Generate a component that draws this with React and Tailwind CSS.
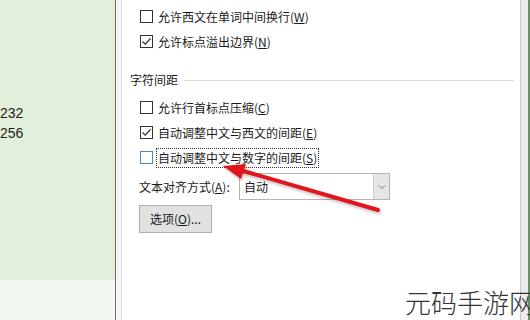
import React from "react";

const font = { fontFamily: '"Microsoft YaHei", "Noto Sans CJK SC", "Noto Sans", sans-serif' };

function Box({ checked, focus }) {
  return (
    <span
      className={`w-[13px] h-[13px] flex-shrink-0 bg-white border flex items-center justify-center ${
        focus ? "border-[#4a86c8]" : "border-[#333]"
      }`}>
      {checked && (
        <svg width="11" height="11" viewBox="0 0 11 11">
          <path d="M1.5 5.5 L4.2 8.2 L9.5 2.5" fill="none" stroke="#333" strokeWidth="1.2" />
        </svg>
      )}
    </span>
  );
}

function Row({ label, hot, checked, focus }) {
  return (
    <div className="h-[25px] flex items-center pl-[18px] gap-[3px]">
      <Box checked={checked} focus={focus} />
      <span
        className={`text-[12px] text-[#1a1a1a] leading-[18px] px-[1px] ${
          focus ? "border border-dotted border-[#333]" : "border border-transparent"
        }`}>
        {label}(<span className="underline">{hot}</span>)
      </span>
    </div>
  );
}

export default function App() {
  return (
    <div className="relative w-[530px] h-[320px] overflow-hidden bg-white flex" style={font}>
      {/* sheet on the left */}
      <div className="w-[116px] flex flex-col border-r border-[#6b6b6b]">
        <div className="h-[280px] bg-[#e2efda] pt-[103px] text-[14px] leading-[20px] text-[#222]" style={{ fontFamily: '"Liberation Sans", Arial, sans-serif' }}>
          <div>232</div>
          <div>256</div>
        </div>
        <div className="flex-1 bg-[#f2f7ef]" />
      </div>
      <div className="w-[6px] bg-[#f4f5f8] border-r border-[#dcdde3]" />

      {/* dialog body */}
      <div className="flex-1 flex flex-col pt-[4px] pr-[6px]">
        <Row label="允许西文在单词中间换行" hot="W" />
        <Row label="允许标点溢出边界" hot="N" checked />

        <div className="mt-[16px] h-[20px] flex items-center pl-[8px] gap-[6px]">
          <span className="text-[12px] text-[#1a1a1a]">字符间距</span>
          <div className="flex-1 h-px bg-[#dcdcdc]" />
        </div>

        <div className="mt-[5px]">
          <Row label="允许行首标点压缩" hot="C" />
          <Row label="自动调整中文与西文的间距" hot="E" checked />
          <Row label="自动调整中文与数字的间距" hot="S" focus />
        </div>

        <div className="mt-[3px] h-[27px] flex items-center pl-[17px]">
          <span className="text-[12px] text-[#1a1a1a] w-[100px]">
            文本对齐方式(<span className="underline">A</span>):
          </span>
          <div className="w-[151px] h-[27px] border border-[#b4b4b4] flex items-center">
            <span className="flex-1 pl-[4px] text-[12px] text-[#1a1a1a]">自动</span>
            <div className="w-[16px] h-full bg-[#e6e6e6] border-l border-[#cfcfcf] flex items-center justify-center">
              <svg width="8" height="6" viewBox="0 0 8 6">
                <path d="M1 1.5 L4 4.5 L7 1.5" fill="none" stroke="#777" strokeWidth="1" />
              </svg>
            </div>
          </div>
        </div>

        <div className="mt-[5px] pl-[17px]">
          <div className="w-[73px] h-[28px] bg-[#e1e1e1] border border-[#adadad] flex items-center justify-center text-[12px] text-[#1a1a1a]">
            选项(<span className="underline">O</span>)...
          </div>
        </div>
      </div>

      {/* right edge */}
      <div className="w-[10px] bg-[#ececec] border-l border-[#c8c8c8] border-r-2 border-r-[#6f8f68]" />

      {/* red arrow */}
      <svg className="absolute inset-0 pointer-events-none" width="530" height="320">
        <defs>
          <filter id="sh" x="-10%" y="-10%" width="120%" height="140%">
            <feDropShadow dx="1" dy="2" stdDeviation="1.5" floodColor="#000" floodOpacity="0.25" />
          </filter>
        </defs>
        <g filter="url(#sh)">
          <line x1="378" y1="210" x2="240" y2="170" stroke="#e3141b" strokeWidth="4" strokeLinecap="round" />
          <polygon points="223,166 246,164 241,179" fill="#e3141b" />
        </g>
      </svg>

      {/* watermark, cut off at the right edge as in the screenshot */}
      <div className="absolute left-[405px] top-[285px] text-[26px] leading-[34px] text-[#333] font-light whitespace-nowrap">
        元码手游网
      </div>
    </div>
  );
}
